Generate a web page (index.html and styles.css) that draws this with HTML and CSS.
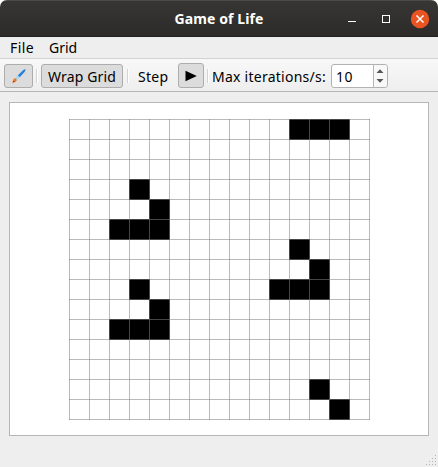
FILE: index.html
```html
<!DOCTYPE html>
<html lang="en">
<head>
<meta charset="utf-8">
<title>Game of Life</title>
<link rel="stylesheet" href="styles.css">
</head>
<body>
<div class="window">
  <header class="titlebar">
    <h1 class="title">Game of Life</h1>
    <svg class="controls" width="90" height="20" viewBox="0 0 90 20">
      <path d="M8 12.5h8" stroke="#fff"/>
      <rect x="42.5" y="6.5" width="7" height="7" fill="none" stroke="#fff"/>
      <circle cx="80" cy="10" r="9.2" fill="#e95420"/>
      <path d="M76.5 6.5l7 7M83.5 6.5l-7 7" stroke="#fff" stroke-width="1.5"/>
    </svg>
  </header>
  <nav class="menubar"><span class="menu-file">File</span><span class="menu-grid">Grid</span></nav>
  <div class="toolbar">
    <button class="tool brush" aria-label="Draw">
      <svg width="16" height="16" viewBox="0 0 16 16">
        <path d="M6 8.2L12 2.2Q14 .8 14.5 1.3Q15 2 13.5 4L8 10Z" fill="#2480d8"/>
        <path d="M3.7 10.3L7 7.3L9 9.3L5.7 12.4Z" fill="#a9d4f5"/>
        <path d="M3.5 10.2Q5.8 10.3 5.8 12.4Q4.8 14.5 1.2 14.5Q2.3 13.2 2.2 11.8Z" fill="#ed7a20"/>
        <path d="M1.2 14.5Q2.3 13.7 2.3 12.7L4.4 13.8Q3 14.5 1.2 14.5Z" fill="#b62d1c"/>
      </svg>
    </button>
    <i class="sep"></i>
    <button class="tool wrap"><span>Wrap Grid</span></button>
    <i class="sep sep-step"></i>
    <span class="step">Step</span>
    <button class="tool play" aria-label="Run">
      <svg width="12" height="12" viewBox="0 0 12 12"><path d="M.5 .8L11.8 6L.5 11.2Z"/></svg>
    </button>
    <i class="sep"></i>
    <span class="rate">Max iterations/s:</span>
    <div class="spin">
      <span class="value">10</span>
      <svg class="arrows" width="13" height="22" viewBox="0 0 13 22"><path d="M2.5 8L6 4.2L9.5 8ZM2.5 14L6 17.8L9.5 14Z" fill="#555"/></svg>
    </div>
  </div>
  <main class="board">
    <svg width="301" height="301" viewBox="0 0 301 301" shape-rendering="crispEdges">
      <path d="M220 0h61v21h-61zM60 60h21v21h-21zM80 80h21v21h-21zM40 100h61v21h-61zM220 120h21v21h-21zM240 140h21v21h-21zM200 160h61v21h-61zM60 160h21v21h-21zM80 180h21v21h-21zM40 200h61v21h-61zM240 260h21v21h-21zM260 280h21v21h-21z"/>
      <g class="lines">
        <path d="M.5 0v301M20.5 0v301M40.5 0v301M60.5 0v301M80.5 0v301M100.5 0v301M120.5 0v301M140.5 0v301M160.5 0v301M180.5 0v301M200.5 0v301M220.5 0v301M240.5 0v301M260.5 0v301M280.5 0v301M300.5 0v301"/>
        <path d="M0 .5h301M0 20.5h301M0 40.5h301M0 60.5h301M0 80.5h301M0 100.5h301M0 120.5h301M0 140.5h301M0 160.5h301M0 180.5h301M0 200.5h301M0 220.5h301M0 240.5h301M0 260.5h301M0 280.5h301M0 300.5h301"/>
      </g>
    </svg>
  </main>
  <footer class="statusbar">
    <svg width="11" height="11" viewBox="0 0 11 11" fill="#b4b4b4" shape-rendering="crispEdges"><path d="M9 0h1v1h-1zM6 3h1v1h-1zM9 3h1v1h-1zM3 6h1v1h-1zM6 6h1v1h-1zM9 6h1v1h-1zM0 9h1v1h-1zM3 9h1v1h-1zM6 9h1v1h-1zM9 9h1v1h-1z"/></svg>
  </footer>
</div>
</body>
</html>
```
FILE: styles.css
```css
* { box-sizing: border-box; }
body {
  margin: 0;
  background: #fff;
  font: 14px/20px "Noto Sans", "Open Sans", sans-serif;
  color: #000;
}
.window {
  width: 438px;
  height: 467px;
  display: flex;
  flex-direction: column;
  overflow: hidden;
  background: #eee;
  border-radius: 7px 7px 0 0;
}
.titlebar {
  height: 37px;
  flex: none;
  display: grid;
  grid-template-columns: 98px 1fr 98px;
  align-items: center;
  background: linear-gradient(#373634, #2c2b2a);
  border-top: 1px solid #4b4a47;
  border-bottom: 1px solid #202020;
}
.title {
  grid-column: 2;
  margin: 0;
  text-align: center;
  color: #fff;
  font-size: 14px;
  font-weight: 700;
  letter-spacing: .1px;
  white-space: nowrap;
}
.menubar {
  height: 22px;
  flex: none;
  display: flex;
  padding: 1px 0 0 10px;
  border-bottom: 1px solid #d2d2d2;
  white-space: nowrap;
}
.menu-file { width: 39px; letter-spacing: .4px; }
.toolbar {
  height: 33px;
  flex: none;
  display: flex;
  align-items: flex-end;
  padding: 0 0 3px 4px;
  background: linear-gradient(#f8f8f8, #eee);
  border-bottom: 1px solid #b6b6b6;
  white-space: nowrap;
}
.tool {
  height: 24px;
  flex: none;
  display: flex;
  align-items: center;
  justify-content: center;
  padding: 0;
  border: 1px solid #adadad;
  border-radius: 3px;
  background: #dcdcdc;
  color: #000;
  font: inherit;
}
.brush { width: 29px; }
.wrap { width: 82px; letter-spacing: .15px; }
.wrap span { padding-top: 1px; }
.play { width: 26px; height: 25px; }
.sep {
  width: 2px;
  height: 14px;
  flex: none;
  margin: 0 3px 5px;
  border-left: 1px solid #d4d4d4;
  border-right: 1px solid #fff;
}
.sep-step { margin: 0 9px 5px 4px; }
.step { width: 40px; flex: none; letter-spacing: .3px; margin-bottom: 1px; }
.rate { width: 119px; flex: none; letter-spacing: .25px; margin-bottom: 1px; }
.spin {
  width: 57px;
  height: 24px;
  flex: none;
  display: flex;
  align-items: center;
  border: 1px solid #b2b2b2;
  border-radius: 3px;
  background: #fff;
}
.value { width: 41px; padding: 1px 0 0 4px; letter-spacing: .5px; }
.arrows {
  width: 14px;
  border-left: 1px solid #b6b6b6;
  background: #f8f8f8;
  border-radius: 0 3px 3px 0;
}
.board {
  width: 420px;
  height: 334px;
  flex: none;
  margin: 10px 9px 0;
  padding: 16px 0 0 59px;
  border: 1px solid #b6b6b6;
  background: #fff;
}
.board svg { display: block; }
.lines { stroke: #808080; stroke-opacity: .55; }
.statusbar {
  flex: 1;
  display: flex;
  justify-content: flex-end;
  align-items: flex-end;
  padding: 0 1px 1px 0;
}
```
